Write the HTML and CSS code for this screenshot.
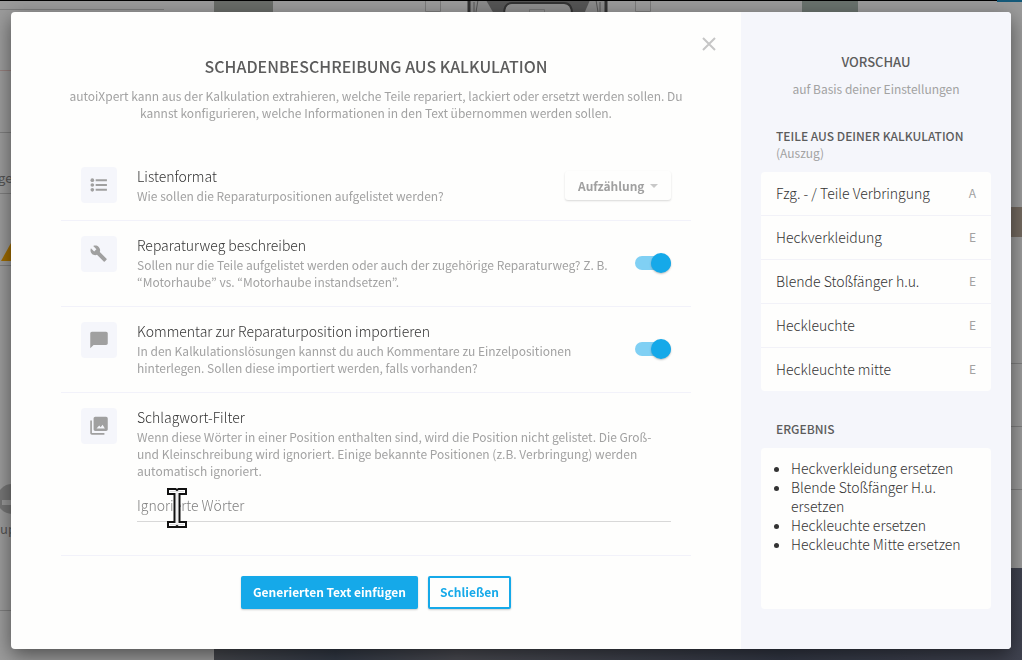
FILE: index.html
```html
<!DOCTYPE html>
<html lang="de">
<head>
  <meta charset="UTF-8" />
  <meta name="viewport" content="width=device-width, initial-scale=1" />
  <title>Schadenbeschreibung aus Kalkulation</title>
  <link rel="stylesheet" href="styles.css">
</head>
<body>

  <!-- dimmed report page behind the dialog -->
  <svg class="backdrop" viewBox="0 0 1022 660" preserveAspectRatio="none" aria-hidden="true">
    <defs>
      <linearGradient id="photo" x1="0" x2="1" y1="0" y2="0">
        <stop offset="0" stop-color="#46484e" />
        <stop offset="0.15" stop-color="#333a46" />
        <stop offset="0.3" stop-color="#4a4b52" />
        <stop offset="0.7" stop-color="#333845" />
        <stop offset="1" stop-color="#404350" />
      </linearGradient>
    </defs>
    <rect width="1022" height="660" fill="#9c9c9c" />
    <path d="M0 9.500H164M0 132.500H20M0 193.500H20M0 265.500H20M0 610.500H214" stroke="#7f7f7f" />
    <path d="M0 70.500H20" stroke="#96807e" />
    <path d="M1000 363.500H1022M1000 426.500H1022M1000 489.500H1022" stroke="#7f7f7f" />
    <rect x="214" width="59" height="20" fill="#6a6d69" />
    <rect x="802" width="56" height="20" fill="#6a736e" />
    <path d="M425.500 0V11.500H440.500V0M635.500 0V11.500H650.500V0" fill="none" stroke="#7c7c7c" />
    <rect x="468" width="139" height="14" fill="#8b8b8b" />
    <path d="M469 0V14M606 0V14" stroke="#333" stroke-width="3" />
    <path d="M486 0H590L584 14H494Z" fill="#555" />
    <path d="M504 14Q504 3 512 3H564Q572 3 572 14" fill="#909090" stroke="#333" stroke-width="2" />
    <path d="M529.500 14V9.500H544.500V14" fill="none" stroke="#777" />
    <path d="M474 2V12M478 0L476 12M600 2V12M596 0L598 12" stroke="#555" />
    <path d="M1 261L11 243V261Z" fill="#a06c00" />
    <circle cx="12" cy="499" r="15" fill="#777" />
    <rect x="2" y="500" width="14" height="5" fill="#999" />
    <text x="-2" y="183">ge</text>
    <text x="0" y="534">up</text>
    <rect x="1000" y="207" width="22" height="30" fill="#746a60" />
    <rect x="214" y="568" width="808" height="92" fill="url(#photo)" />
    <rect width="1022" height="1" fill="#000" />
    <rect x="997" width="25" height="2" fill="#155a7a" />
  </svg>

  <div class="overlay">
    <div class="dialog" role="dialog" aria-labelledby="dialogTitle">
      <main class="settings">
        <button class="close-btn" aria-label="Dialog verlassen">
          <svg width="14" height="14" viewBox="0 0 14 14"><path d="M1 1L13 13M13 1L1 13" /></svg>
        </button>
        <h1 id="dialogTitle">SCHADENBESCHREIBUNG AUS KALKULATION</h1>
        <p class="intro">autoiXpert kann aus der Kalkulation extrahieren, welche Teile repariert, lackiert oder ersetzt werden sollen. Du kannst konfigurieren, welche Informationen in den Text übernommen werden sollen.</p>

        <section class="setting">
          <div class="icon">
            <svg viewBox="0 0 24 24"><path d="M8 19h13.500v-2.400H8zM8 13.200h13.500v-2.400H8zM8 5v2.400h13.500V5z" /><circle cx="4" cy="6.200" r="2.200" /><circle cx="4" cy="12" r="2.200" /><circle cx="4" cy="17.800" r="2.200" /></svg>
          </div>
          <div class="text">
            <label class="title" for="listFormat">Listenformat</label>
            <p>Wie sollen die Reparaturpositionen aufgelistet werden?</p>
          </div>
          <div class="select">
            <select id="listFormat">
              <option>Aufzählung</option>
            </select>
          </div>
        </section>

        <section class="setting">
          <div class="icon">
            <svg viewBox="-1 -1 27 27"><path d="M22.700 19l-9.100-9.100c.9-2.300.4-5-1.500-6.900-2-2-5-2.400-7.400-1.300L9 6 6 9 1.600 4.700C.4 7.100.9 10.100 2.900 12.100c1.900 1.900 4.600 2.400 6.900 1.500l9.100 9.100c.4.4 1 .4 1.400 0l2.300-2.300c.5-.4.5-1.100.1-1.400z" /></svg>
          </div>
          <div class="text">
            <label class="title" for="repairMethod">Reparaturweg beschreiben</label>
            <p>Sollen nur die Teile aufgelistet werden oder auch der zugehörige Reparaturweg? Z. B. “Motorhaube” vs. “Motorhaube instandsetzen”.</p>
          </div>
          <input type="checkbox" class="toggle" id="repairMethod" checked>
        </section>

        <section class="setting">
          <div class="icon">
            <svg viewBox="0 0 24 24"><path d="M20.500 2h-17c-1.100 0-2 .9-2 2v18l4-4h15c1.100 0 2-.9 2-2V4c0-1.100-.9-2-2-2z" /></svg>
          </div>
          <div class="text">
            <label class="title" for="importComments">Kommentar zur Reparaturposition importieren</label>
            <p>In den Kalkulationslösungen kannst du auch Kommentare zu Einzelpositionen hinterlegen. Sollen diese importiert werden, falls vorhanden?</p>
          </div>
          <input type="checkbox" class="toggle" id="importComments" checked>
        </section>

        <section class="setting filter">
          <div class="icon">
            <svg viewBox="0 0 24 24"><path fill-rule="evenodd" d="M3.500 5.500H1.500v15c0 1.100.9 2 2 2h15v-2h-15zM22.500 3v13c0 1.100-.9 2-2 2h-13c-1.100 0-2-.9-2-2V3c0-1.100.9-2 2-2h13c1.100 0 2 .9 2 2zM9 15h10l-2.700-4.500-2.300 3-1.700-2z" /></svg>
          </div>
          <div class="text">
            <label class="title" for="ignoredWords">Schlagwort-Filter</label>
            <p>Wenn diese Wörter in einer Position enthalten sind, wird die Position nicht gelistet. Die Groß- und Kleinschreibung wird ignoriert. Einige bekannte Positionen (z.B. Verbringung) werden automatisch ignoriert.</p>
            <div class="field">
              <input type="text" id="ignoredWords" placeholder="Ignorierte Wörter">
              <svg class="cursor" width="20" height="40" viewBox="0 0 20 40"><path d="M1 1H8.500L10 2 11.500 1H19V6H12.500V34H19V39H11.500L10 38 8.500 39H1V34H7.500V6H1Z" /><path class="inner" d="M3 3.500H17M3 36.500H17M10 4V36" /></svg>
            </div>
          </div>
        </section>

        <div class="actions">
          <button class="btn primary">Generierten Text einfügen</button>
          <button class="btn">Schließen</button>
        </div>
      </main>

      <aside class="preview">
        <h2>VORSCHAU</h2>
        <p class="basis">auf Basis deiner Einstellungen</p>

        <h3>TEILE AUS DEINER KALKULATION</h3>
        <p class="hint">(Auszug)</p>
        <ul class="parts">
          <li>Fzg. - / Teile Verbringung <span>A</span></li>
          <li>Heckverkleidung <span>E</span></li>
          <li>Blende Stoßfänger h.u. <span>E</span></li>
          <li>Heckleuchte <span>E</span></li>
          <li>Heckleuchte mitte <span>E</span></li>
        </ul>

        <h3>ERGEBNIS</h3>
        <div class="result">
          <ul>
            <li>Heckverkleidung ersetzen</li>
            <li>Blende Stoßfänger H.u. ersetzen</li>
            <li>Heckleuchte ersetzen</li>
            <li>Heckleuchte Mitte ersetzen</li>
          </ul>
        </div>
      </aside>
    </div>
  </div>

</body>
</html>
```
FILE: styles.css
```css
* {
  box-sizing: border-box;
}
body {
  margin: 0;
  background: #9c9c9c;
  color: #333;
  font-family: "Noto Sans CJK KR", "Noto Sans", sans-serif;
  font-size: 14px;
  font-weight: 300;
}
h1, h2, h3, p, ul {
  margin: 0;
  padding: 0;
}
button, input, select {
  font-family: inherit;
}
.backdrop {
  position: fixed;
  top: 0;
  left: 0;
  width: 100%;
  height: 100%;
}
.backdrop text {
  font-size: 13px;
  font-weight: 400;
  fill: #555;
}
.overlay {
  position: relative;
  min-height: 100vh;
  padding: 12px 11px 11px;
}
.dialog {
  display: flex;
  max-width: 1000px;
  margin: 0 auto;
  background: #fefefd;
  border-radius: 4px;
  overflow: hidden;
  box-shadow: 0 6px 20px rgba(0, 0, 0, 0.5);
}

/* left side */
.settings {
  position: relative;
  flex: 1;
  padding: 42px 50px 40px;
}
.close-btn {
  position: absolute;
  top: 20px;
  right: 20px;
  padding: 5px;
  line-height: 0;
  background: none;
  border: none;
  cursor: pointer;
}
.close-btn path {
  stroke: #c6c6c6;
  stroke-width: 2;
}
h1 {
  color: #5c5c5c;
  font-size: 16px;
  font-weight: 500;
  line-height: 25px;
  text-align: center;
}
.intro {
  margin: 8px 0 31px;
  color: #a2a2a2;
  font-size: 12px;
  font-weight: 400;
  line-height: 17px;
  text-align: center;
}
.setting {
  display: flex;
  align-items: center;
  padding: 15px 20px;
  border-bottom: 1px solid #f2f2fa;
}
.icon {
  display: flex;
  align-self: flex-start;
  align-items: center;
  justify-content: center;
  width: 36px;
  height: 36px;
  margin-right: 20px;
  background: #f5f6fb;
  border-radius: 4px;
}
.icon svg {
  width: 20px;
  height: 20px;
  fill: #a0a0a0;
}
.text {
  flex: 1;
  padding-bottom: 1px;
}
.title {
  display: block;
  margin-bottom: 2px;
  line-height: 18px;
}
.text p {
  color: #a2a2a2;
  font-size: 12px;
  font-weight: 400;
  line-height: 17px;
}
.select {
  position: relative;
  margin-bottom: 1px;
}
.select::after {
  content: "";
  position: absolute;
  top: 13px;
  right: 13px;
  border: 4px solid transparent;
  border-top-color: #c8c8c8;
  border-bottom: none;
  pointer-events: none;
}
.select select {
  display: block;
  width: 106px;
  height: 29px;
  padding: 0 13px;
  appearance: none;
  background: #fefefd;
  border: none;
  border-radius: 3px;
  box-shadow: 0 1px 2px rgba(0, 0, 0, 0.15);
  color: #a0a0a0;
  font-size: 12px;
  font-weight: bold;
}
.toggle {
  position: relative;
  width: 36px;
  height: 14px;
  margin: 0 0 1px 15px;
  appearance: none;
  background: #ccc;
  border-radius: 7px;
  cursor: pointer;
}
.toggle::before {
  content: "";
  position: absolute;
  top: -3px;
  left: 0;
  width: 20px;
  height: 20px;
  background: #fff;
  border-radius: 50%;
  box-shadow: 0 1px 2px rgba(0, 0, 0, 0.25);
}
.toggle:checked {
  background: #80d0f4;
}
.toggle:checked::before {
  left: 16px;
  background: #15a9e9;
}
.filter {
  padding-bottom: 32px;
}
.field {
  position: relative;
  margin-top: 11px;
}
.field input {
  display: block;
  width: 100%;
  height: 32px;
  padding: 0 0 2px;
  background: none;
  border: none;
  border-bottom: 1px solid #d8d8d8;
  font-size: 14px;
  font-weight: 300;
  outline: none;
}
.field input::placeholder {
  color: #808080;
}
.cursor {
  position: absolute;
  top: -2px;
  left: 30px;
  fill: #fff;
  stroke: #111;
  stroke-width: 2;
}
.cursor .inner {
  stroke: #ddd;
  stroke-width: 1;
}
.actions {
  display: flex;
  justify-content: center;
  gap: 10px;
  margin-top: 20px;
}
.btn {
  height: 33px;
  padding: 0 10px 2px;
  background: #fefefd;
  border: 2px solid #15a9e9;
  border-radius: 2px;
  box-shadow: 0 1px 2px rgba(0, 0, 0, 0.2);
  color: #15a9e9;
  font-size: 12px;
  font-weight: bold;
  cursor: pointer;
}
.btn.primary {
  background: #15a9e9;
  color: #fff;
}

/* right side */
.preview {
  width: 270px;
  padding: 40px 20px;
  background: #f5f6fb;
}
h2 {
  color: #5c5c5c;
  font-size: 13px;
  font-weight: 500;
  line-height: 20px;
  text-align: center;
}
.basis {
  margin: 8px 0 30px;
  color: #a2a2a2;
  font-size: 12px;
  font-weight: 400;
  line-height: 17px;
  text-align: center;
}
h3 {
  padding-left: 15px;
  color: #5c5c5c;
  font-size: 12px;
  font-weight: 500;
  line-height: 17px;
}
.hint {
  padding-left: 15px;
  color: #a2a2a2;
  font-size: 12px;
  font-weight: 400;
  line-height: 17px;
}
.parts {
  margin: 11px 0 29px;
  background: #fefefd;
  border-radius: 4px;
  list-style: none;
}
.parts li {
  display: flex;
  align-items: center;
  justify-content: space-between;
  height: 44px;
  padding: 0 15px 2px;
  border-bottom: 1px solid #f2f2f8;
}
.parts li:last-child {
  height: 43px;
  border-bottom: none;
}
.parts span {
  color: #a2a2a2;
  font-size: 12px;
  font-weight: 400;
}
.result {
  min-height: 161px;
  margin-top: 11px;
  padding: 11px 15px;
  background: #fefefd;
  border-radius: 4px;
}
.result ul {
  padding-left: 15px;
}
.result li {
  line-height: 19px;
}
```
